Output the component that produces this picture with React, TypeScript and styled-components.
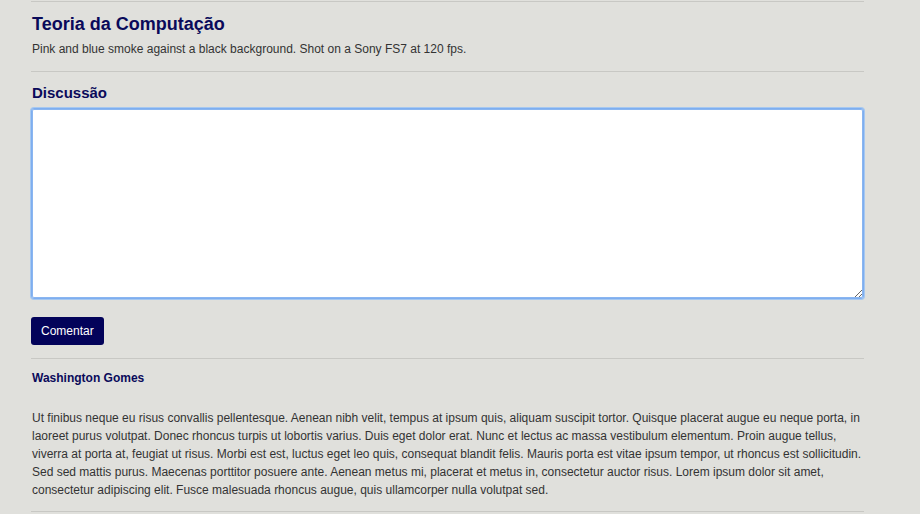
import React from 'react'
import styled, { createGlobalStyle } from 'styled-components'

const GlobalStyle = createGlobalStyle`
  html, body {
    margin: 0;
    padding: 0;
    background: #e0e0dc;
  }
  body {
    font-family: 'Liberation Sans', Arial, sans-serif;
    color: #333;
  }
`

const Page = styled.main`
  width: 833px;
  padding: 1px 0 0 31px;
`

const Rule = styled.hr`
  border: 0;
  border-top: 1px solid #c8c8c4;
  margin: 0;
`

const Header = styled.section`
  padding: 12px 1px 13px;
  display: flex;
  flex-direction: column;
  gap: 6px;
`

const Title = styled.h1`
  margin: 0;
  font-size: 18px;
  line-height: 20px;
  font-weight: bold;
  color: #0a0a5a;
`

const Lead = styled.p`
  margin: 0;
  font-size: 12px;
  line-height: 18px;
  color: #333;
`

const Discussion = styled.section`
  padding: 12px 0 13px;
  display: flex;
  flex-direction: column;
  align-items: flex-start;
`

const SectionTitle = styled.h2`
  margin: 0 0 7px 1px;
  font-size: 15px;
  line-height: 17px;
  font-weight: bold;
  color: #0a0a5a;
`

const CommentBox = styled.textarea`
  box-sizing: border-box;
  width: 833px;
  height: 191px;
  margin: 0 0 18px;
  padding: 8px 9px;
  border: 1px solid #7eaef0;
  border-radius: 3px;
  box-shadow: 0 0 0 1px #a6c8f0, inset 0 0 0 1px #8ab6f0;
  background: #fff;
  font-family: 'Liberation Sans', Arial, sans-serif;
  font-size: 12px;
  color: #333;
  resize: vertical;
  outline: none;
  caret-color: #333;
`

const SubmitButton = styled.button`
  height: 28px;
  padding: 0 10px;
  border: 0;
  border-radius: 3px;
  background: #03035a;
  color: #fff;
  font-family: 'Liberation Sans', Arial, sans-serif;
  font-size: 12px;
  cursor: pointer;
`

const Comment = styled.article`
  padding: 10px 1px 12px;
  display: flex;
  flex-direction: column;
  gap: 22px;
`

const Author = styled.h3`
  margin: 0;
  font-size: 12px;
  line-height: 18px;
  font-weight: bold;
  color: #0a0a5a;
`

const CommentText = styled.p`
  margin: 0;
  font-size: 12px;
  line-height: 18px;
  color: #333;
`

const body =
  'Ut finibus neque eu risus convallis pellentesque. Aenean nibh velit, tempus at ipsum quis, aliquam suscipit tortor. Quisque placerat augue eu neque porta, in laoreet purus volutpat. Donec rhoncus turpis ut lobortis varius. Duis eget dolor erat. Nunc et lectus ac massa vestibulum elementum. Proin augue tellus, viverra at porta at, feugiat ut risus. Morbi est est, luctus eget leo quis, consequat blandit felis. Mauris porta est vitae ipsum tempor, ut rhoncus est sollicitudin. Sed sed mattis purus. Maecenas porttitor posuere ante. Aenean metus mi, placerat et metus in, consectetur auctor risus. Lorem ipsum dolor sit amet, consectetur adipiscing elit. Fusce malesuada rhoncus augue, quis ullamcorper nulla volutpat sed.'

export default function App() {
  return (
    <>
      <GlobalStyle />
      <Page>
        <Rule />
        <Header>
          <Title>Teoria da Computação</Title>
          <Lead>
            Pink and blue smoke against a black background. Shot on a Sony FS7
            at 120 fps.
          </Lead>
        </Header>
        <Rule />
        <Discussion>
          <SectionTitle>Discussão</SectionTitle>
          <CommentBox autoFocus />
          <SubmitButton>Comentar</SubmitButton>
        </Discussion>
        <Rule />
        <Comment>
          <Author>Washington Gomes</Author>
          <CommentText>{body}</CommentText>
        </Comment>
        <Rule />
      </Page>
    </>
  )
}
